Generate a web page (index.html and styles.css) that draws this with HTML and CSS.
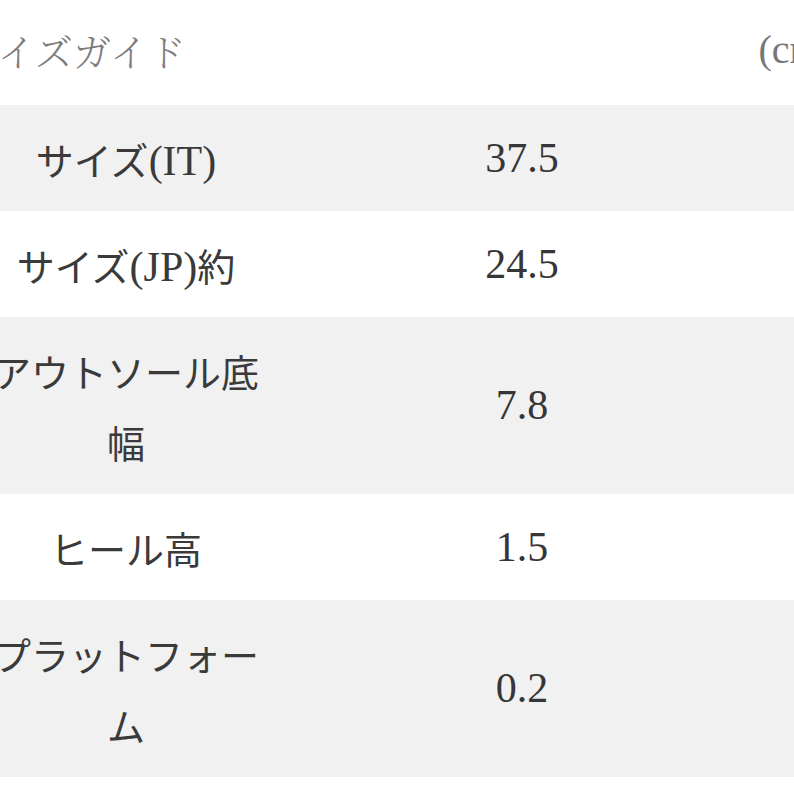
FILE: index.html
```html
<!DOCTYPE html>
<html lang="ja">
<head>
<meta charset="utf-8">
<title>サイズガイド</title>
<link rel="stylesheet" href="styles.css">
</head>
<body>
<div class="page">
  <div class="header">
    <h2 class="title">サイズガイド</h2>
    <span class="unit">(cm)</span>
  </div>
  <table class="guide">
    <colgroup>
      <col class="c-label">
      <col class="c-value">
      <col class="c-rest">
    </colgroup>
    <tbody>
      <tr class="shade">
        <td class="label">サイズ<span class="lat">(IT)</span></td>
        <td class="value">37.5</td>
        <td></td>
      </tr>
      <tr>
        <td class="label">サイズ<span class="lat">(JP)</span>約</td>
        <td class="value">24.5</td>
        <td></td>
      </tr>
      <tr class="shade">
        <td class="label">アウトソール底幅</td>
        <td class="value">7.8</td>
        <td></td>
      </tr>
      <tr>
        <td class="label">ヒール高</td>
        <td class="value">1.5</td>
        <td></td>
      </tr>
      <tr class="shade">
        <td class="label">プラットフォーム</td>
        <td class="value">0.2</td>
        <td></td>
      </tr>
    </tbody>
  </table>
</div>
</body>
</html>
```
FILE: styles.css
```css
html, body {
  margin: 0;
  padding: 0;
  background: #ffffff;
}

body {
  overflow: hidden;
  font-family: "Liberation Serif", "Noto Sans CJK JP", serif;
  color: #333333;
}

.page {
  width: 880px;
  margin-left: -38px;
}

.header {
  height: 105px;
  display: flex;
  align-items: center;
  justify-content: space-between;
  padding-bottom: 6px;
  box-sizing: border-box;
}

.title {
  margin: 0;
  font-family: "Noto Serif CJK JP", "Noto Sans CJK JP", serif;
  font-weight: 300;
  font-size: 38px;
  line-height: 1;
  color: #7d7d7d;
}

.unit {
  font-family: "Liberation Serif", serif;
  font-size: 40px;
  line-height: 1;
  color: #777777;
  margin-right: 8px;
}

.guide {
  width: 880px;
  border-collapse: collapse;
  table-layout: fixed;
}

.c-label { width: 328px; }
.c-value { width: 464px; }

.guide td {
  padding: 17.5px 24px;
  height: 71px;
  vertical-align: middle;
  text-align: center;
  line-height: 71px;
}

.shade td {
  background: #f1f1f1;
}

.label {
  font-family: "Noto Sans CJK JP", sans-serif;
  font-weight: 400;
  font-size: 38px;
  color: #3a3a3a;
}

.lat {
  font-family: "Liberation Serif", serif;
  font-size: 42px;
  line-height: 1;
  vertical-align: baseline;
}

.value {
  font-family: "Liberation Serif", serif;
  font-size: 42px;
  color: #363636;
}
```
